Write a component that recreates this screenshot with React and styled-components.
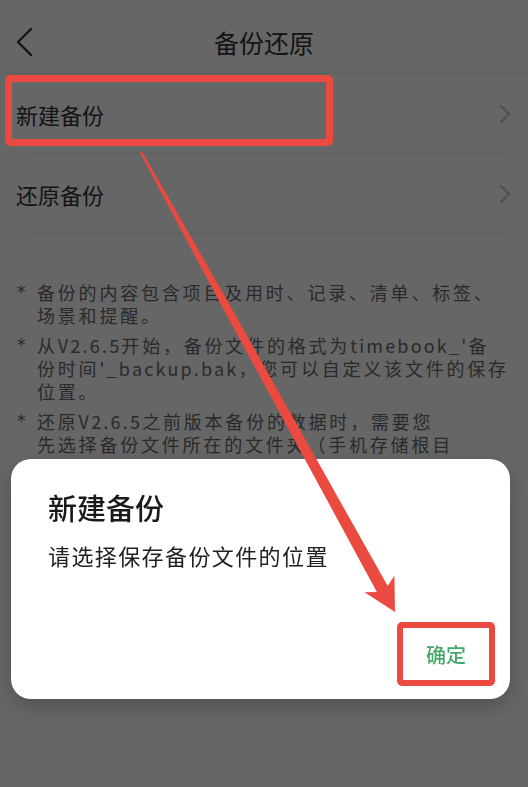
import React from "react";
import styled, { createGlobalStyle } from "styled-components";

const GlobalStyle = createGlobalStyle`
  html, body { margin: 0; padding: 0; background: #ffffff; }
  body { font-family: "Noto Sans CJK SC", "Noto Sans", sans-serif; }
  * { box-sizing: border-box; }
`;

const Screen = styled.div`
  position: relative;
  width: 528px;
  height: 787px;
  overflow: hidden;
  background: #ffffff;
`;

const Header = styled.header`
  height: 74px;
  padding-top: 13px;
  display: flex;
  align-items: center;
  justify-content: center;
  position: relative;
  border-bottom: 1px solid #ececec;
`;

const BackButton = styled.button`
  position: absolute;
  left: 12px;
  top: 24px;
  width: 26px;
  height: 36px;
  padding: 0;
  border: none;
  background: transparent;
  display: flex;
  align-items: center;
  justify-content: center;
`;

const Title = styled.h1`
  margin: 0;
  font-size: 25px;
  font-weight: 400;
  line-height: 34px;
  color: #333333;
  transform: translateY(-1px);
`;

const Row = styled.div`
  height: 80px;
  display: flex;
  align-items: center;
  justify-content: space-between;
  padding: 0 17px 0 16px;
  position: relative;
  &::after {
    content: "";
    position: absolute;
    left: 28px;
    right: 20px;
    bottom: 0;
    height: 1px;
    background: #ebebeb;
  }
`;

const RowLabel = styled.span`
  font-size: 22px;
  line-height: 30px;
  color: #333333;
`;

const Notes = styled.div`
  padding: 47px 0 0 17px;
  display: flex;
  flex-direction: column;
  gap: 7px;
`;

const Note = styled.div`
  display: grid;
  grid-template-columns: 20px 1fr;
  font-size: 18px;
  line-height: 23px;
  color: #6a6a6a;
`;

const Star = styled.span`
  font-family: "DejaVu Sans", sans-serif;
  font-size: 17px;
  line-height: 23px;
`;

const NoteLine = styled.span`
  display: block;
  white-space: nowrap;
  letter-spacing: 2.8px;
`;

const Latin = styled.span`
  letter-spacing: 2.2px;
`;

const Overlay = styled.div`
  position: fixed;
  inset: 0;
  background: rgba(0, 0, 0, 0.6);
  display: flex;
  align-items: flex-start;
  padding: 459px 18px 0 11px;
`;

const Dialog = styled.div`
  width: 100%;
  height: 240px;
  background: #ffffff;
  border-radius: 20px;
  box-shadow: 0 8px 22px rgba(0, 0, 0, 0.22);
  display: flex;
  flex-direction: column;
  padding: 30px 20px 23px 37px;
`;

const DialogTitle = styled.h2`
  margin: 0;
  font-size: 29px;
  line-height: 36px;
  font-weight: 500;
  color: #1a1a1a;
`;

const DialogBody = styled.p`
  margin: 15px 0 0;
  font-size: 22px;
  line-height: 30px;
  letter-spacing: 1.4px;
  color: #1f1f1f;
`;

const DialogFooter = styled.div`
  margin-top: auto;
  display: flex;
  justify-content: flex-end;
`;

const ConfirmButton = styled.button`
  height: 44px;
  padding: 0 24px 0 12px;
  border: none;
  background: transparent;
  font-family: "Noto Sans CJK SC", sans-serif;
  font-size: 20px;
  font-weight: 500;
  color: #45a86b;
`;

const Highlight = styled.div`
  position: absolute;
  left: ${(p) => p.$x}px;
  top: ${(p) => p.$y}px;
  width: ${(p) => p.$w}px;
  height: ${(p) => p.$h}px;
  border: ${(p) => p.$b}px solid #ea4a3f;
  border-radius: 5px;
  pointer-events: none;
`;

const ArrowLayer = styled.svg`
  position: absolute;
  left: 0;
  top: 0;
  width: 528px;
  height: 787px;
  pointer-events: none;
`;

const ChevronLeft = () => (
  <svg width="20" height="30" viewBox="0 0 20 30">
    <polyline points="16,2 3,15 16,28" fill="none" stroke="#333" strokeWidth="2.4" strokeLinecap="round" strokeLinejoin="round" />
  </svg>
);

const ChevronRight = () => (
  <svg width="12" height="20" viewBox="0 0 12 20">
    <polyline points="2,2 10,10 2,18" fill="none" stroke="#c6c6c6" strokeWidth="2.2" strokeLinecap="round" strokeLinejoin="round" />
  </svg>
);

const notes = [
  [["备份的内容包含项目及用时、记录、清单、标签、"], ["场景和提醒。"]],
  [
    ["从", <Latin key="a">V2.6.5</Latin>, "开始，备份文件的格式为", <Latin key="b">timebook_'</Latin>, "备"],
    ["份时间", <Latin key="c">'_backup.bak</Latin>, "，您可以自定义该文件的保存"],
    ["位置。"],
  ],
  [
    ["还原", <Latin key="d">V2.6.5</Latin>, "之前版本备份的数据时，需要您"],
    ["先选择备份文件所在的文件夹（手机存储根目"],
    ["录/timebook/）， 转换数据后再还原，否则转换"],
  ],
];

export default function App() {
  return (
    <>
      <GlobalStyle />
      <Screen>
        <Header>
          <BackButton aria-label="返回">
            <ChevronLeft />
          </BackButton>
          <Title>备份还原</Title>
        </Header>
        <Row>
          <RowLabel>新建备份</RowLabel>
          <ChevronRight />
        </Row>
        <Row>
          <RowLabel>还原备份</RowLabel>
          <ChevronRight />
        </Row>
        <Notes>
          {notes.map((lines, i) => (
            <Note key={i}>
              <Star>*</Star>
              <div>
                {lines.map((l, j) => (
                  <NoteLine key={j}>{l}</NoteLine>
                ))}
              </div>
            </Note>
          ))}
        </Notes>

        <Overlay>
          <Dialog>
            <DialogTitle>新建备份</DialogTitle>
            <DialogBody>请选择保存备份文件的位置</DialogBody>
            <DialogFooter>
              <ConfirmButton>确定</ConfirmButton>
            </DialogFooter>
          </Dialog>
        </Overlay>

        <Highlight $x={5} $y={75} $w={328} $h={71} $b={7} />
        <Highlight $x={397} $y={622} $w={98} $h={64} $b={6} />
        <ArrowLayer viewBox="0 0 528 787">
          <polygon
            fill="#ea4a3f"
            points="142.05,151.42 226,298.2 387.7,586 394.4,575.8 395,612 364.6,592.2 376.9,592 219.4,301.8 139.95,152.58"
          />
        </ArrowLayer>
      </Screen>
    </>
  );
}
